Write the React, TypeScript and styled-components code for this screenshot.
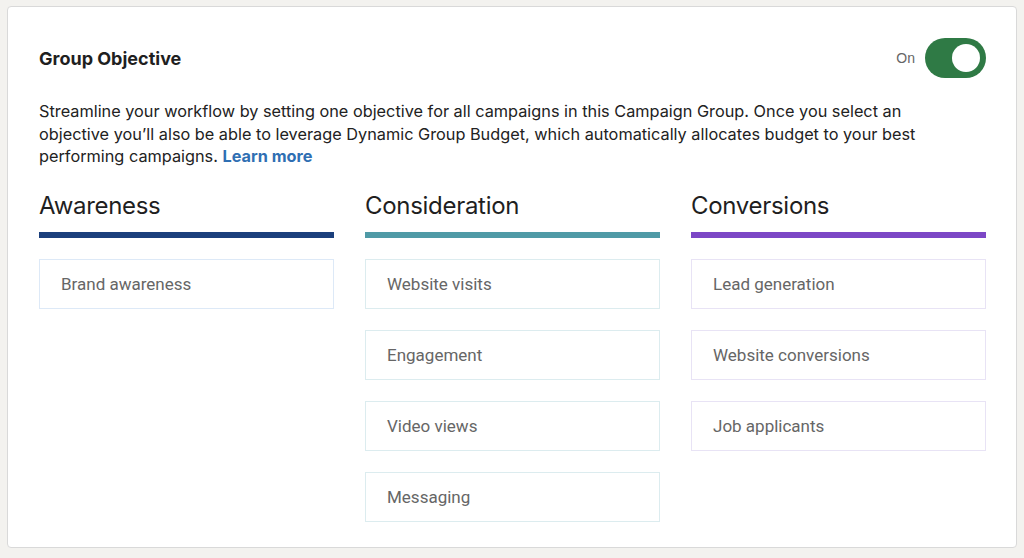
import React from "react";
import styled, { createGlobalStyle } from "styled-components";

const GlobalStyle = createGlobalStyle`
  body {
    margin: 0;
    background: #f3f2ef;
    font-family: "Liberation Sans", Arial, sans-serif;
  }
`;

const columns = [
  { title: "Awareness", bar: "#1b3f7c", border: "#dde9f7", items: ["Brand awareness"] },
  {
    title: "Consideration",
    bar: "#4f9aa6",
    border: "#dcecef",
    items: ["Website visits", "Engagement", "Video views", "Messaging"],
  },
  {
    title: "Conversions",
    bar: "#7c47c6",
    border: "#e8e3f5",
    items: ["Lead generation", "Website conversions", "Job applicants"],
  },
];

export default function App() {
  return (
    <Page>
      <GlobalStyle />
      <Card>
        <Header>
          <Title>Group Objective</Title>
          <ToggleWrap>
            <ToggleLabel>On</ToggleLabel>
            <Switch>
              <Knob />
            </Switch>
          </ToggleWrap>
        </Header>
        <Description>
          <Line>Streamline your workflow by setting one objective for all campaigns in this Campaign Group. Once you select an</Line>
          <Line>objective you’ll also be able to leverage Dynamic Group Budget, which automatically allocates budget to your best</Line>
          <Line>
            performing campaigns. <LearnMore href="#">Learn more</LearnMore>
          </Line>
        </Description>
        <Columns>
          {columns.map((col) => (
            <Column key={col.title}>
              <ColumnTitle>{col.title}</ColumnTitle>
              <Bar color={col.bar} />
              <Options>
                {col.items.map((item) => (
                  <Option key={item} border={col.border}>
                    {item}
                  </Option>
                ))}
              </Options>
            </Column>
          ))}
        </Columns>
      </Card>
    </Page>
  );
}

const Page = styled.div`
  padding: 6px 7px 0 7px;
  height: 558px;
  box-sizing: border-box;
`;

const Card = styled.div`
  background: #fff;
  border: 1px solid #d9d9d9;
  border-radius: 4px;
  height: 542px;
  box-sizing: border-box;
  padding: 30px 30px 0 31px;
`;

const Header = styled.div`
  display: flex;
  justify-content: space-between;
  align-items: center;
  height: 42px;
`;

const Title = styled.h2`
  margin: 0;
  font-size: 18px;
  font-weight: 700;
  color: #1f1f1f;
  font-family: "Inter", sans-serif;
`;

const ToggleWrap = styled.div`
  display: flex;
  align-items: center;
  gap: 10px;
`;

const ToggleLabel = styled.span`
  font-size: 14px;
  color: #666;
`;

const Switch = styled.div`
  width: 61px;
  height: 40px;
  border-radius: 20px;
  background: #2f7a45;
  display: flex;
  align-items: center;
  justify-content: flex-end;
  padding: 0 6px;
  box-sizing: border-box;
`;

const Knob = styled.div`
  width: 28px;
  height: 28px;
  border-radius: 50%;
  background: #fff;
`;

const Description = styled.div`
  margin-top: 21px;
  font-size: 16.3px;
  line-height: 22.5px;
  color: #222;
  font-family: "Inter", sans-serif;
`;

const Line = styled.div`
  white-space: nowrap;
`;

const LearnMore = styled.a`
  color: #2f6fb3;
  font-weight: 700;
  text-decoration: none;
`;

const Columns = styled.div`
  display: grid;
  grid-template-columns: repeat(3, 295px);
  column-gap: 31px;
  margin-top: 22px;
`;

const Column = styled.div`
  display: flex;
  flex-direction: column;
`;

const ColumnTitle = styled.div`
  font-size: 24px;
  color: #1f1f1f;
  line-height: 32px;
  font-family: "Inter", sans-serif;
  letter-spacing: -0.3px;
`;

const Bar = styled.div<{ color: string }>`
  height: 6px;
  background: ${({ color }) => color};
  margin-top: 10px;
`;

const Options = styled.div`
  display: flex;
  flex-direction: column;
  gap: 21px;
  margin-top: 21px;
`;

const Option = styled.div<{ border: string }>`
  height: 50px;
  box-sizing: border-box;
  border: 1.5px solid ${({ border }) => border};
  display: flex;
  align-items: center;
  padding-left: 21px;
  font-size: 17px;
  color: #666;
  font-family: "Roboto", sans-serif;
`;
